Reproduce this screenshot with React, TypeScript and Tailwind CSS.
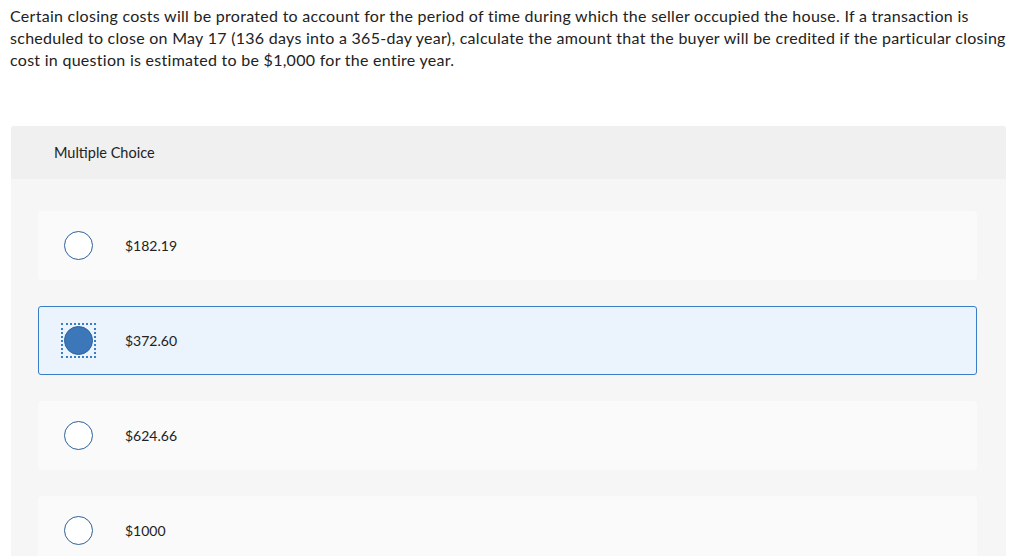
import React from "react";

const options = ["$182.19", "$372.60", "$624.66", "$1000"];

export default function App() {
  const selected = 1;
  return (
    <div className="w-[1024px] h-[556px] overflow-hidden bg-white text-[#222222]" style={{ fontFamily: "Lato, 'Open Sans', sans-serif" }}>
      <p className="px-[10px] pt-[5px] text-[16px] leading-[22px] tracking-[0.28px] text-[#222222] whitespace-nowrap">
        Certain closing costs will be prorated to account for the period of time during which the seller occupied the house. If a transaction is
        <br />
        scheduled to close on May 17 (136 days into a 365-day year), calculate the amount that the buyer will be credited if the particular closing
        <br />
        cost in question is estimated to be $1,000 for the entire year.
      </p>
      <div className="mt-[55px] ml-[11px] w-[995px] rounded-t-[3px] bg-[#f6f6f6]">
        <div className="h-[53px] flex items-center pl-[43px] bg-[#f0f0f0] rounded-t-[3px] text-[14.5px] text-[#222222]">
          Multiple Choice
        </div>
        <div className="pt-[32px] pl-[27px] flex flex-col gap-[26px]">
          {options.map((o, i) => {
            const sel = i === selected;
            return (
              <div
                key={o}
                className={
                  sel
                    ? "w-[939px] h-[69px] rounded-[3px] border border-[#3a7cc6] bg-[#ebf3fc] flex items-center"
                    : "w-[939px] h-[69px] rounded-[3px] border border-[#fafafa] bg-[#fafafa] flex items-center"
                }
              >
                <div className="ml-[22px] w-[35px] h-[35px] flex items-center justify-center relative">
                  {sel && (
                    <div className="absolute inset-0 border-[2px] border-dotted border-[#3a7cc6]" />
                  )}
                  <div
                    className={
                      sel
                        ? "w-[29px] h-[29px] rounded-full border border-[#2d6199] bg-[#3c78b9]"
                        : "w-[29px] h-[29px] rounded-full border border-[#2d6199] bg-white"
                    }
                  />
                </div>
                <div className="ml-[29px] text-[14px] text-[#222222]">{o}</div>
              </div>
            );
          })}
        </div>
      </div>
    </div>
  );
}
